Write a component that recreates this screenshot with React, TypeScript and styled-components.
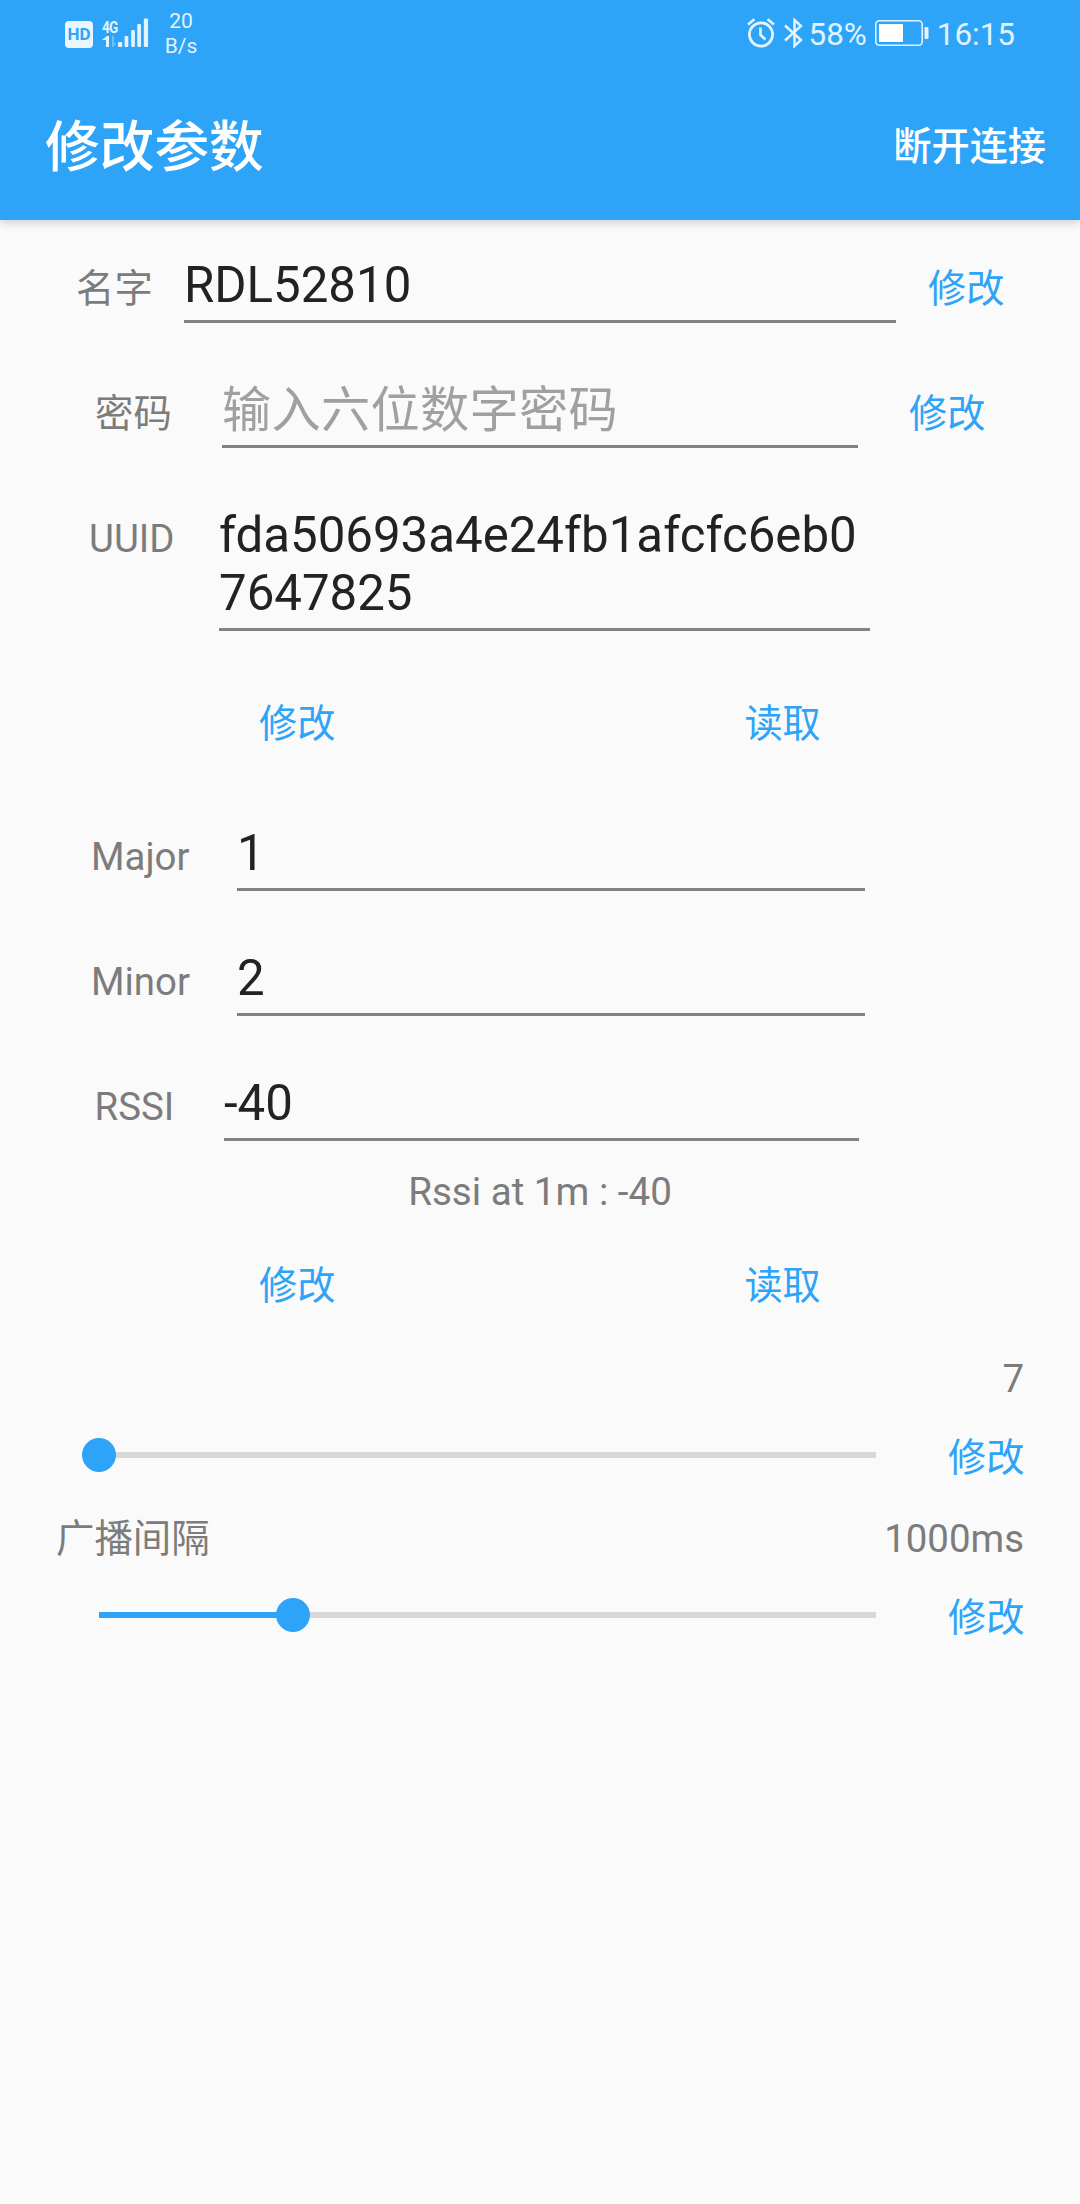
import React from "react";
import styled, { createGlobalStyle } from "styled-components";

const BLUE = "#2da4f8";

const GlobalStyle = createGlobalStyle`
  *, *::before, *::after { box-sizing: border-box; }
  body {
    margin: 0;
    background: #fafafa;
    font-family: Roboto, "Noto Sans CJK SC", sans-serif;
  }
`;

const Screen = styled.div`
  width: 1080px;
  height: 2204px;
  background: #fafafa;
  overflow: hidden;
`;

const Header = styled.header`
  height: 220px;
  background: ${BLUE};
  color: #fff;
  box-shadow: 0 2px 10px rgba(0, 0, 0, 0.2);
`;

const StatusBar = styled.div`
  display: flex;
  justify-content: space-between;
  height: 70px;
  padding: 0 65px;
  color: #e2f3ff;
`;

const StatusGroup = styled.div`
  display: flex;
  align-items: center;
  height: 66px;
`;

const NetSpeed = styled.div`
  margin-left: 15px;
  padding-top: 2px;
  width: 34px;
  text-align: center;
  font-size: 21px;
  line-height: 25px;
`;

const StatusText = styled.span<{ $gap: number }>`
  margin-left: ${(p) => p.$gap}px;
  font-size: 31.4px;
  line-height: 38px;
  padding-top: 3px;
  white-space: nowrap;
`;

const Toolbar = styled.div`
  display: flex;
  align-items: center;
  justify-content: space-between;
  height: 150px;
  padding: 3px 34px 0 45px;
`;

const Title = styled.h1`
  margin: 0;
  font-size: 54.7px;
  line-height: 64px;
  font-weight: 500;
`;

const ToolbarAction = styled.button`
  border: 0;
  padding: 0;
  background: none;
  color: inherit;
  font-family: inherit;
  font-size: 38.2px;
  line-height: 46px;
  font-weight: 500;
`;

const Row = styled.div<{ $start: number }>`
  display: flex;
  align-items: baseline;
  min-height: 125px;
  padding: 37px 0 0 ${(p) => p.$start}px;
`;

const Label = styled.label<{ $width: number }>`
  flex: none;
  width: ${(p) => p.$width}px;
  font-size: 38.4px;
  line-height: 46px;
  color: #7c7c7c;
  white-space: nowrap;
`;

const Field = styled.div<{ $width: number; $placeholder?: boolean }>`
  flex: none;
  width: ${(p) => p.$width}px;
  padding-bottom: 5.4px;
  margin-bottom: 22px;
  border-bottom: 3px solid #838383;
  font-size: 49.2px;
  line-height: 57.6px;
  letter-spacing: ${(p) => (p.$placeholder ? "0.3px" : "0")};
  color: ${(p) => (p.$placeholder ? "#a0a0a0" : "#222")};
  word-break: break-all;
`;

const Action = styled.button<{ $gap?: number }>`
  border: 0;
  padding: 0;
  margin: 0 0 0 ${(p) => p.$gap ?? 0}px;
  background: none;
  color: ${BLUE};
  font-family: inherit;
  font-size: 38.2px;
  line-height: 46px;
  white-space: nowrap;
`;

const ButtonRow = styled.div<{ $height: number }>`
  display: flex;
  align-items: center;
  height: ${(p) => p.$height}px;
  padding: 7px 0 0 259px;
`;

const Hint = styled.p`
  margin: 0;
  height: 62px;
  padding-top: 6px;
  text-align: center;
  font-size: 38.6px;
  line-height: 46px;
  color: #7c7c7c;
`;

const Caption = styled.div`
  display: flex;
  justify-content: space-between;
  height: 46px;
  padding: 1px 56px 0 56px;
  font-size: 38.4px;
  line-height: 46px;
  color: #7c7c7c;
`;

const SliderRow = styled.div`
  display: flex;
  align-items: center;
  height: 114px;
  padding-left: 99px;
`;

const Track = styled.div`
  position: relative;
  flex: none;
  width: 777px;
  height: 6px;
  margin-top: -6px;
  background: #d8d8d8;
`;

const Fill = styled.div`
  height: 100%;
  background: ${BLUE};
`;

const Thumb = styled.div`
  position: absolute;
  top: -14px;
  width: 34px;
  height: 34px;
  margin-left: -17px;
  border-radius: 50%;
  background: ${BLUE};
`;

const Sliders = styled.section`
  padding-top: 15px;
`;

function Slider({ value }: { value: number }) {
  return (
    <Track>
      <Fill style={{ width: `${value}%` }} />
      <Thumb style={{ left: `${value}%` }} />
    </Track>
  );
}

const HdBadge = styled.span`
  display: flex;
  align-items: center;
  justify-content: center;
  width: 28px;
  height: 27px;
  margin-top: 2px;
  border-radius: 4px;
  background: #e9f6ff;
  color: ${BLUE};
  font-size: 17px;
  font-weight: 700;
`;

const Network = styled.div`
  display: flex;
  flex-direction: column;
  width: 16px;
  height: 29px;
  margin: 0 0 0 9px;
  font-size: 16px;
  line-height: 17px;
  font-weight: 700;
  letter-spacing: -1px;
`;

const NetworkType = styled.span`
  transform: scaleX(0.85);
  transform-origin: left;
`;

function Arrows() {
  return (
    <svg width="16" height="11" viewBox="0 0 16 11" fill="currentColor">
      <path d="M4 11V4H0L5 0h2v11z" />
      <path d="M10 0h2v7h3l-4 4h-1z" opacity=".35" />
    </svg>
  );
}

function Signal() {
  return (
    <svg width="31" height="30" viewBox="0 0 33 30" preserveAspectRatio="none" fill="currentColor">
      <rect x="0" y="24" width="4.5" height="5" rx="1" />
      <rect x="7" y="18" width="4" height="11" rx="1" />
      <rect x="14" y="12" width="4" height="17" rx="1" />
      <rect x="20.5" y="6" width="4" height="23" rx="1" />
      <rect x="27.5" y="0.5" width="4.5" height="28.5" rx="1" />
    </svg>
  );
}

function Alarm() {
  return (
    <svg width="28" height="30" viewBox="0 0 28 30" fill="none" stroke="currentColor" strokeWidth="2.7">
      <circle cx="14" cy="16.5" r="11.6" />
      <path d="M13.5 9.5v7.5l5 4.5" />
      <path d="M1 6.5L7.5 1.2M27 6.5l-6.5-5.3" />
    </svg>
  );
}

const Bluetooth = styled.svg`
  margin-left: 9px;
`;

const Battery = styled.svg`
  margin-left: 8px;
`;

export default function App() {
  return (
    <Screen>
      <GlobalStyle />
      <Header>
        <StatusBar>
          <StatusGroup>
            <HdBadge>HD</HdBadge>
            <Network>
              <NetworkType>4G</NetworkType>
              <Arrows />
            </Network>
            <Signal />
            <NetSpeed>
              20
              <br />
              B/s
            </NetSpeed>
          </StatusGroup>
          <StatusGroup>
            <Alarm />
            <Bluetooth width="19" height="30" viewBox="0 0 19 30" fill="none" stroke="currentColor" strokeWidth="2.5">
              <path d="M1 7.5l16 14.5-6.5 6V2l6.5 6L1 22.5" />
            </Bluetooth>
            <StatusText $gap={6}>58%</StatusText>
            <Battery width="54" height="26" viewBox="0 0 54 26">
              <rect x="0.8" y="0.8" width="46.4" height="24.4" rx="3.5" fill="none" stroke="currentColor" strokeWidth="1.6" />
              <rect x="4" y="4" width="24" height="18" fill="#fff" />
              <rect x="49.5" y="7" width="4" height="12" rx="1" fill="currentColor" />
            </Battery>
            <StatusText $gap={8}>16:15</StatusText>
          </StatusGroup>
        </StatusBar>
        <Toolbar>
          <Title>修改参数</Title>
          <ToolbarAction>断开连接</ToolbarAction>
        </Toolbar>
      </Header>

      <main>
        <Row $start={76}>
          <Label $width={108}>名字</Label>
          <Field $width={712}>RDL52810</Field>
          <Action $gap={32}>修改</Action>
        </Row>
        <Row $start={95}>
          <Label $width={127}>密码</Label>
          <Field $width={636} $placeholder>
            输入六位数字密码
          </Field>
          <Action $gap={51}>修改</Action>
        </Row>
        <Row $start={89}>
          <Label $width={130}>UUID</Label>
          <Field $width={651}>fda50693a4e24fb1afcfc6eb07647825</Field>
        </Row>
        <ButtonRow $height={135}>
          <Action>修改</Action>
          <Action $gap={409}>读取</Action>
        </ButtonRow>
        <Row $start={91}>
          <Label $width={146}>Major</Label>
          <Field $width={628}>1</Field>
        </Row>
        <Row $start={91}>
          <Label $width={146}>Minor</Label>
          <Field $width={628}>2</Field>
        </Row>
        <Row $start={94.5}>
          <Label $width={129.5}>RSSI</Label>
          <Field $width={635}>-40</Field>
        </Row>
        <Hint>Rssi at 1m : -40</Hint>
        <ButtonRow $height={115}>
          <Action>修改</Action>
          <Action $gap={409}>读取</Action>
        </ButtonRow>
        <Sliders>
          <Caption>
            <span />
            <span>7</span>
          </Caption>
          <SliderRow>
            <Slider value={0} />
            <Action $gap={72}>修改</Action>
          </SliderRow>
          <Caption>
            <span>广播间隔</span>
            <span>1000ms</span>
          </Caption>
          <SliderRow>
            <Slider value={25} />
            <Action $gap={72}>修改</Action>
          </SliderRow>
        </Sliders>
      </main>
    </Screen>
  );
}
